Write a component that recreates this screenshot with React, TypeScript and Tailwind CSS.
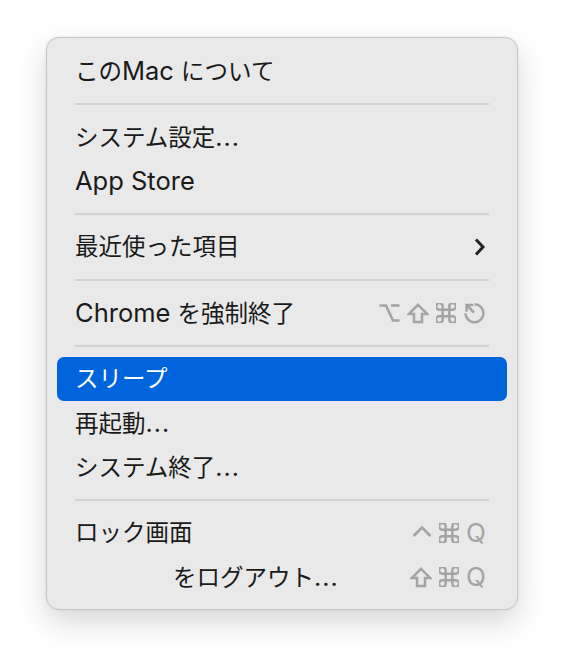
import React from "react";

const gray = "#a4a4a4";

function OptionKey() {
  return (
    <svg width="21" height="20" viewBox="0 0 21 20" fill="none" stroke={gray} strokeWidth="2.6">
      <path d="M0.5 2.5 H7 L14 17.5 H20.5" />
      <path d="M12 2.5 H20.5" />
    </svg>
  );
}

function ShiftKey() {
  return (
    <svg width="22" height="21" viewBox="0 0 22 21" fill="none" stroke={gray} strokeWidth="2.5">
      <path d="M11 1.8 L20.3 11 H15 V19 H7 V11 H1.7 Z" />
    </svg>
  );
}

function CommandKey() {
  return (
    <svg width="20" height="20" viewBox="3 3 18 18" fill="none" stroke={gray} strokeWidth="2.2">
      <path d="M15 6v12a3 3 0 1 0 3-3H6a3 3 0 1 0 3 3V6a3 3 0 1 0-3 3h12a3 3 0 1 0-3-3" />
    </svg>
  );
}

function EscapeKey() {
  return (
    <svg width="23" height="22" viewBox="0 0 23 22" fill="none" stroke={gray} strokeWidth="2.5">
      <path d="M11.5 2.2 A9 9 0 1 1 2.5 11.2" />
      <path d="M11 10.5 L4 3.5" />
      <path d="M3.6 9.8 V3.1 H10.3" />
    </svg>
  );
}

function ControlKey() {
  return (
    <svg width="20" height="20" viewBox="0 0 20 20" fill="none" stroke={gray} strokeWidth="2.6">
      <path d="M1.5 13 L10 4.5 L18.5 13" />
    </svg>
  );
}

function QKey() {
  return <span className="text-[26px] leading-none text-[#a4a4a4]">Q</span>;
}

function Chevron() {
  return (
    <svg width="13" height="20" viewBox="0 0 13 20" fill="none" stroke="#222222" strokeWidth="3">
      <path d="M3 2.5 L10 10 L3 17.5" />
    </svg>
  );
}

// latin runs are set a touch larger, like SF next to the CJK face
function L({ children }: { children: React.ReactNode }) {
  return <span className="text-[25.5px]">{children}</span>;
}

function Dots() {
  return <span className="text-[25px] tracking-[1px]">...</span>;
}

function Separator() {
  return (
    <div className="h-[22px] flex items-center px-[18px]">
      <div className="h-[2px] w-full bg-[#d2d2d2]" />
    </div>
  );
}

function Row({
  children,
  right,
  active,
  indent,
}: {
  children: React.ReactNode;
  right?: React.ReactNode;
  active?: boolean;
  indent?: boolean;
}) {
  return (
    <div
      className={
        active
          ? "h-[44px] flex items-center justify-between px-[18px] rounded-[7px] bg-[#0064dc] text-white"
          : "h-[44px] flex items-center justify-between px-[18px] text-[#1a1a1a]"
      }
    >
      <span className={indent ? "pl-[98px] whitespace-nowrap" : "whitespace-nowrap"}>{children}</span>
      {right && <div className="flex items-center gap-[7px] pr-[3px]">{right}</div>}
    </div>
  );
}

export default function App() {
  return (
    <div className="min-h-screen bg-white pl-[46px] pt-[37px]">
      <div
        className="w-[472px] rounded-[13px] border border-[#c6c6c6] bg-[#e9e9e9] pt-[11px] pb-[10px] px-[10px] shadow-[0_12px_30px_rgba(0,0,0,0.16),0_0_3px_rgba(0,0,0,0.08)] text-[23.5px] leading-none font-normal"
        style={{ fontFamily: "Inter, 'Noto Sans CJK JP', sans-serif" }}
      >
        <Row>
          この<L>Mac </L>について
        </Row>
        <Separator />
        <Row>
          システム設定<Dots />
        </Row>
        <Row>
          <L>App Store</L>
        </Row>
        <Separator />
        <Row right={<Chevron />}>最近使った項目</Row>
        <Separator />
        <Row
          right={
            <>
              <OptionKey />
              <ShiftKey />
              <CommandKey />
              <EscapeKey />
            </>
          }
        >
          <L>Chrome </L>を強制終了
        </Row>
        <Separator />
        <Row active>スリープ</Row>
        <Row>
          再起動<Dots />
        </Row>
        <Row>
          システム終了<Dots />
        </Row>
        <Separator />
        <Row
          right={
            <>
              <ControlKey />
              <CommandKey />
              <QKey />
            </>
          }
        >
          ロック画面
        </Row>
        <Row
          indent
          right={
            <>
              <ShiftKey />
              <CommandKey />
              <QKey />
            </>
          }
        >
          をログアウト<Dots />
        </Row>
      </div>
    </div>
  );
}
